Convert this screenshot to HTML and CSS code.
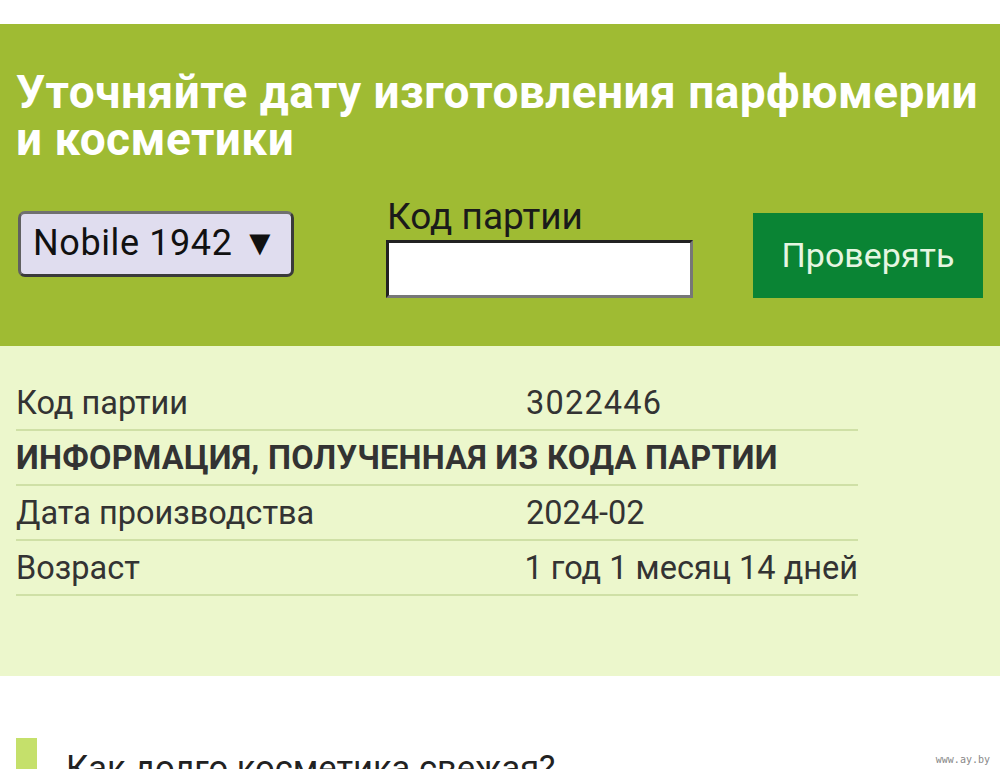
FILE: index.html
```html
<!DOCTYPE html>
<html lang="ru">
<head>
<meta charset="utf-8">
<link rel="stylesheet" href="styles.css">
</head>
<body>
<div class="topgap"></div>
<header class="hero">
  <h1 class="title">Уточняйте дату изготовления парфюмерии и косметики</h1>
  <div class="form">
    <div class="select">Nobile 1942 ▼</div>
    <div class="field">
      <div class="label">Код партии</div>
      <div class="input"></div>
    </div>
    <div class="button">Проверять</div>
  </div>
</header>
<section class="result">
  <div class="table">
    <div class="row"><div class="k">Код партии</div><div class="v code">3022446</div></div>
    <div class="row"><div class="head">ИНФОРМАЦИЯ, ПОЛУЧЕННАЯ ИЗ КОДА ПАРТИИ</div></div>
    <div class="row"><div class="k">Дата производства</div><div class="v">2024-02</div></div>
    <div class="row"><div class="k">Возраст</div><div class="v">1 год 1 месяц 14 дней</div></div>
  </div>
</section>
<section class="article">
  <div class="bar"></div>
  <h2 class="subtitle">Как долго косметика свежая?</h2>
  <div class="wm">www.ay.by</div>
</section>
</body>
</html>
```
FILE: styles.css
```css
html, body { margin: 0; padding: 0; }
body {
  font-family: Roboto, "Noto Sans", sans-serif;
  background: #ffffff;
  width: 1000px;
  height: 769px;
  overflow: hidden;
  position: relative;
}
.topgap { height: 24px; }
.hero {
  background: #9fbb33;
  height: 322px;
  padding: 0 16px;
  box-sizing: border-box;
  overflow: hidden;
}
.title {
  margin: 0;
  padding-top: 45px;
  font-size: 46px;
  line-height: 47px;
  font-weight: 700;
  color: #ffffff;
  letter-spacing: 0.45px;
}
.form {
  display: flex;
  align-items: flex-start;
  margin-top: 34px;
}
.select {
  margin-top: 14px;
  margin-left: 2px;
  width: 276px;
  height: 66px;
  box-sizing: border-box;
  background: #e0ddef;
  border: 3px solid #3a3a3a;
  border-top-color: #707070;
  border-left-color: #606060;
  border-radius: 7px;
  font-size: 36px;
  line-height: 58px;
  padding-left: 12px;
  color: #111;
  white-space: nowrap;
  letter-spacing: 0.6px;
}
.field { margin-left: 92px; display: flex; flex-direction: column; }
.label {
  font-size: 37px;
  line-height: 40px;
  color: #1a1a1a;
  margin-left: 1px;
}
.input {
  margin-top: 3px;
  width: 307px;
  height: 58px;
  box-sizing: border-box;
  background: #fff;
  border: 3px solid;
  border-color: #222 #777 #777 #222;
}
.button {
  margin-left: 60px;
  margin-top: 16px;
  width: 230px;
  height: 85px;
  background: #0a8434;
  color: #e6f6e2;
  font-size: 34px;
  line-height: 85px;
  text-align: center;
}
.result {
  background: #ecf7cc;
  height: 330px;
  padding: 30px 0 0 16px;
  box-sizing: border-box;
}
.table { width: 842px; }
.row {
  display: flex;
  height: 55px;
  box-sizing: border-box;
  border-bottom: 2px solid #cfe0a6;
  align-items: center;
  font-size: 32.5px;
  color: #333;
  white-space: nowrap;
}
.k { width: 510px; }
.v { flex: 1; }
.code { letter-spacing: 1.2px; }
.head { font-weight: 700; letter-spacing: 0.25px; }
.article {
  position: relative;
  height: 93px;
  padding: 62px 0 0 16px;
  box-sizing: border-box;
  display: flex;
  align-items: flex-start;
}
.bar {
  width: 21px;
  height: 40px;
  background: #c5e06b;
}
.subtitle {
  margin: 10px 0 0 29px;
  font-size: 34.5px;
  line-height: 40px;
  font-weight: 400;
  color: #222;
}
.wm {
  position: absolute;
  right: 10px;
  top: 78px;
  font-family: "DejaVu Sans Mono", monospace;
  font-size: 10px;
  color: #888;
}
```
